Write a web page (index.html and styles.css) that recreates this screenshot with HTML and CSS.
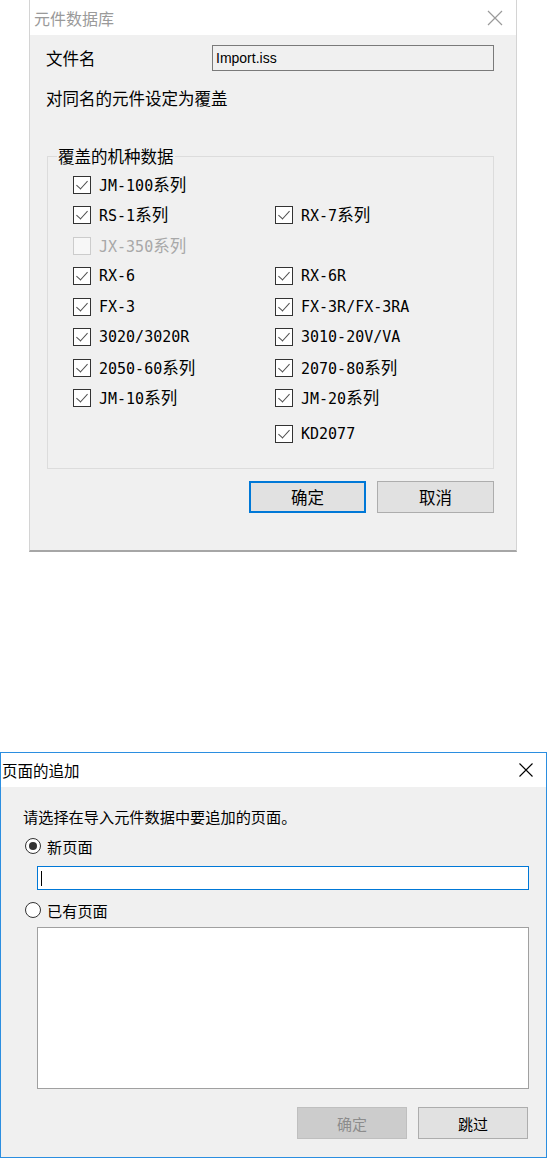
FILE: index.html
```html
<!DOCTYPE html>
<html lang="zh">
<head>
<meta charset="utf-8">
<link rel="stylesheet" href="styles.css">
</head>
<body>
<div class="page">
  <div class="dlg dlg1">
    <div class="titlebar tb1">
      <span class="title title-inactive">元件数据库</span>
      <svg class="close" width="16" height="16" viewBox="0 0 16 16"><path d="M1 1L15 15M15 1L1 15" stroke="#9a9a9a" stroke-width="1.2" fill="none"/></svg>
    </div>
    <div class="body body1">
      <div class="file-row">
        <span class="file-label">文件名</span>
        <div class="file-input">Import.iss</div>
      </div>
      <div class="note">对同名的元件设定为覆盖</div>
      <fieldset class="group">
        <legend>覆盖的机种数据</legend>
        <div class="checks">
          <div class="chk c1"><span class="box on"></span><span class="lbl">JM-100<span class="cj">系列</span></span></div>
          <div class="chk c1"><span class="box on"></span><span class="lbl">RS-1<span class="cj">系列</span></span></div>
          <div class="chk c2"><span class="box on"></span><span class="lbl">RX-7<span class="cj">系列</span></span></div>
          <div class="chk c1 dis"><span class="box"></span><span class="lbl">JX-350<span class="cj">系列</span></span></div>
          <div class="chk c1"><span class="box on"></span><span class="lbl">RX-6</span></div>
          <div class="chk c2"><span class="box on"></span><span class="lbl">RX-6R</span></div>
          <div class="chk c1"><span class="box on"></span><span class="lbl">FX-3</span></div>
          <div class="chk c2"><span class="box on"></span><span class="lbl">FX-3R/FX-3RA</span></div>
          <div class="chk c1"><span class="box on"></span><span class="lbl">3020/3020R</span></div>
          <div class="chk c2"><span class="box on"></span><span class="lbl">3010-20V/VA</span></div>
          <div class="chk c1"><span class="box on"></span><span class="lbl">2050-60<span class="cj">系列</span></span></div>
          <div class="chk c2"><span class="box on"></span><span class="lbl">2070-80<span class="cj">系列</span></span></div>
          <div class="chk c1"><span class="box on"></span><span class="lbl">JM-10<span class="cj">系列</span></span></div>
          <div class="chk c2"><span class="box on"></span><span class="lbl">JM-20<span class="cj">系列</span></span></div>
          <div class="chk c2 last"><span class="box on"></span><span class="lbl">KD2077</span></div>
        </div>
      </fieldset>
      <div class="btns btns1">
        <button class="btn btn1 default">确定</button>
        <button class="btn btn1">取消</button>
      </div>
    </div>
  </div>

  <div class="dlg dlg2">
    <div class="titlebar tb2">
      <span class="title">页面的追加</span>
      <svg class="close" width="14" height="14" viewBox="0 0 14 14"><path d="M0.5 0.5L13.5 13.5M13.5 0.5L0.5 13.5" stroke="#000" stroke-width="1.1" fill="none"/></svg>
    </div>
    <div class="body body2">
      <div class="intro">请选择在导入元件数据中要追加的页面。</div>
      <div class="radio-row r1"><span class="radio on"></span><span>新页面</span></div>
      <div class="text-input"><span class="caret"></span></div>
      <div class="radio-row r2"><span class="radio"></span><span>已有页面</span></div>
      <div class="listbox"></div>
      <div class="btns btns2">
        <button class="btn btn2 disabled">确定</button>
        <button class="btn btn2">跳过</button>
      </div>
    </div>
  </div>
</div>
</body>
</html>
```

FILE: styles.css
```css
html, body {
  margin: 0;
  padding: 0;
  background: #ffffff;
}
body {
  width: 547px;
  height: 1158px;
  overflow: hidden;
  font-family: "Noto Sans CJK SC", "Noto Sans", sans-serif;
  color: #000;
}
.page {
  display: flex;
  flex-direction: column;
}
.dlg {
  box-sizing: border-box;
  display: flex;
  flex-direction: column;
}
.dlg1 {
  margin-left: 29px;
  width: 488px;
  height: 552px;
}
.titlebar {
  display: flex;
  align-items: center;
  justify-content: space-between;
  background: #ffffff;
  box-sizing: border-box;
  height: 35px;
  flex: none;
}
.tb1 {
  border-left: 1px solid #d4d4d4;
  border-right: 1px solid #d4d4d4;
  padding: 0 13px 0 4px;
}
.title {
  font-size: 16px;
  line-height: 20px;
}
.title-inactive {
  color: #9a9a9a;
}
.body {
  flex: 1;
  background: #f0f0f0;
  display: flex;
  flex-direction: column;
  box-sizing: border-box;
}
.body1 {
  border-left: 1px solid #d4d4d4;
  border-right: 1px solid #d4d4d4;
  border-bottom: 2px solid #a6a6a6;
  padding: 10px 22px 0 16px;
  font-size: 16.5px;
}
.file-row {
  display: flex;
  align-items: center;
  height: 26px;
}
.file-label {
  width: 166px;
  line-height: 20px;
}
.file-input {
  box-sizing: border-box;
  width: 282px;
  height: 26px;
  border: 1px solid #7a7a7a;
  background: #f0f0f0;
  font-family: "Liberation Sans", sans-serif;
  font-size: 14px;
  line-height: 24px;
  padding-left: 3px;
}
.note {
  margin-top: 17px;
  line-height: 20px;
}
.group {
  margin: 38px 0 0 1px;
  width: 447px;
  box-sizing: border-box;
  padding: 3.5px 0 23.5px 25px;
  border: 1px solid #dcdcdc;
  min-width: 0;
}
.group legend {
  margin-left: -16px;
  padding: 0 1px;
  line-height: 20px;
}
.checks {
  display: grid;
  grid-template-columns: 202px 1fr;
  grid-auto-rows: 30.5px;
}
.chk {
  display: flex;
  align-items: center;
  gap: 8px;
}
.c1 { grid-column: 1; }
.c2 { grid-column: 2; }
.chk.last {
  align-self: start;
  height: 30.5px;
  margin-top: 5px;
}
.box {
  box-sizing: border-box;
  width: 18px;
  height: 18px;
  border: 1px solid #333333;
  background: #ffffff;
  position: relative;
  flex: none;
}
.box.on::after {
  content: "";
  position: absolute;
  left: 5px;
  top: 1px;
  width: 5px;
  height: 10px;
  border-right: 1.3px solid #4d4d4d;
  border-bottom: 1.3px solid #4d4d4d;
  transform: rotate(42deg);
}
.lbl {
  font-family: "DejaVu Sans Mono", "Noto Sans CJK SC", monospace;
  font-size: 15px;
  line-height: 20px;
  color: #000;
}
.cj {
  font-family: "Noto Sans CJK SC", sans-serif;
  font-size: 16.5px;
}
.chk.dis .box {
  border-color: #cccccc;
  background: #f7f7f7;
}
.chk.dis .lbl {
  color: #a8a8a8;
}
.btns {
  display: flex;
  justify-content: flex-end;
  gap: 11px;
}
.btns1 {
  margin-top: 12px;
}
.btn {
  box-sizing: border-box;
  height: 32px;
  background: #e1e1e1;
  border: 1px solid #adadad;
  border-radius: 0;
  font-family: "Noto Sans CJK SC", sans-serif;
  color: #000;
  padding: 0;
  margin: 0;
}
.btn1 {
  width: 117px;
  font-size: 16.5px;
}
.btn1.default {
  border: 2px solid #0078d7;
}
.dlg2 {
  width: 547px;
  height: 406px;
  margin-top: 200px;
  border: 1px solid #2b8ee0;
}
.tb2 {
  height: 34px;
  padding: 0 13px 0 1px;
}
.tb2 .title {
  font-size: 15.5px;
}
.body2 {
  padding: 19px 18px 0 22px;
  font-size: 15.2px;
}
.intro {
  line-height: 20px;
}
.radio-row {
  display: flex;
  align-items: center;
  gap: 6px;
  height: 20px;
  line-height: 20px;
  margin-left: 2px;
}
.r1 { margin-top: 10px; }
.r2 { margin-top: 10px; }
.radio {
  box-sizing: border-box;
  width: 16px;
  height: 16px;
  border: 1px solid #333333;
  border-radius: 50%;
  background: #ffffff;
  display: flex;
  align-items: center;
  justify-content: center;
  flex: none;
}
.radio.on::after {
  content: "";
  width: 8px;
  height: 8px;
  border-radius: 50%;
  background: #333333;
}
.text-input {
  box-sizing: border-box;
  margin: 10px 0 0 14px;
  width: 492px;
  height: 24px;
  border: 1px solid #0078d7;
  background: #ffffff;
  display: flex;
  align-items: center;
  padding-left: 3px;
}
.caret {
  width: 1px;
  height: 15px;
  background: #000;
}
.listbox {
  box-sizing: border-box;
  margin: 7px 0 0 14px;
  width: 492px;
  height: 162px;
  border: 1px solid #a0a0a0;
  background: #ffffff;
}
.btns2 {
  margin-top: 18px;
}
.btn2 {
  width: 110px;
  font-size: 15px;
}
.btn2.disabled {
  background: #cccccc;
  border-color: #bfbfbf;
  color: #8c8c8c;
}
```
